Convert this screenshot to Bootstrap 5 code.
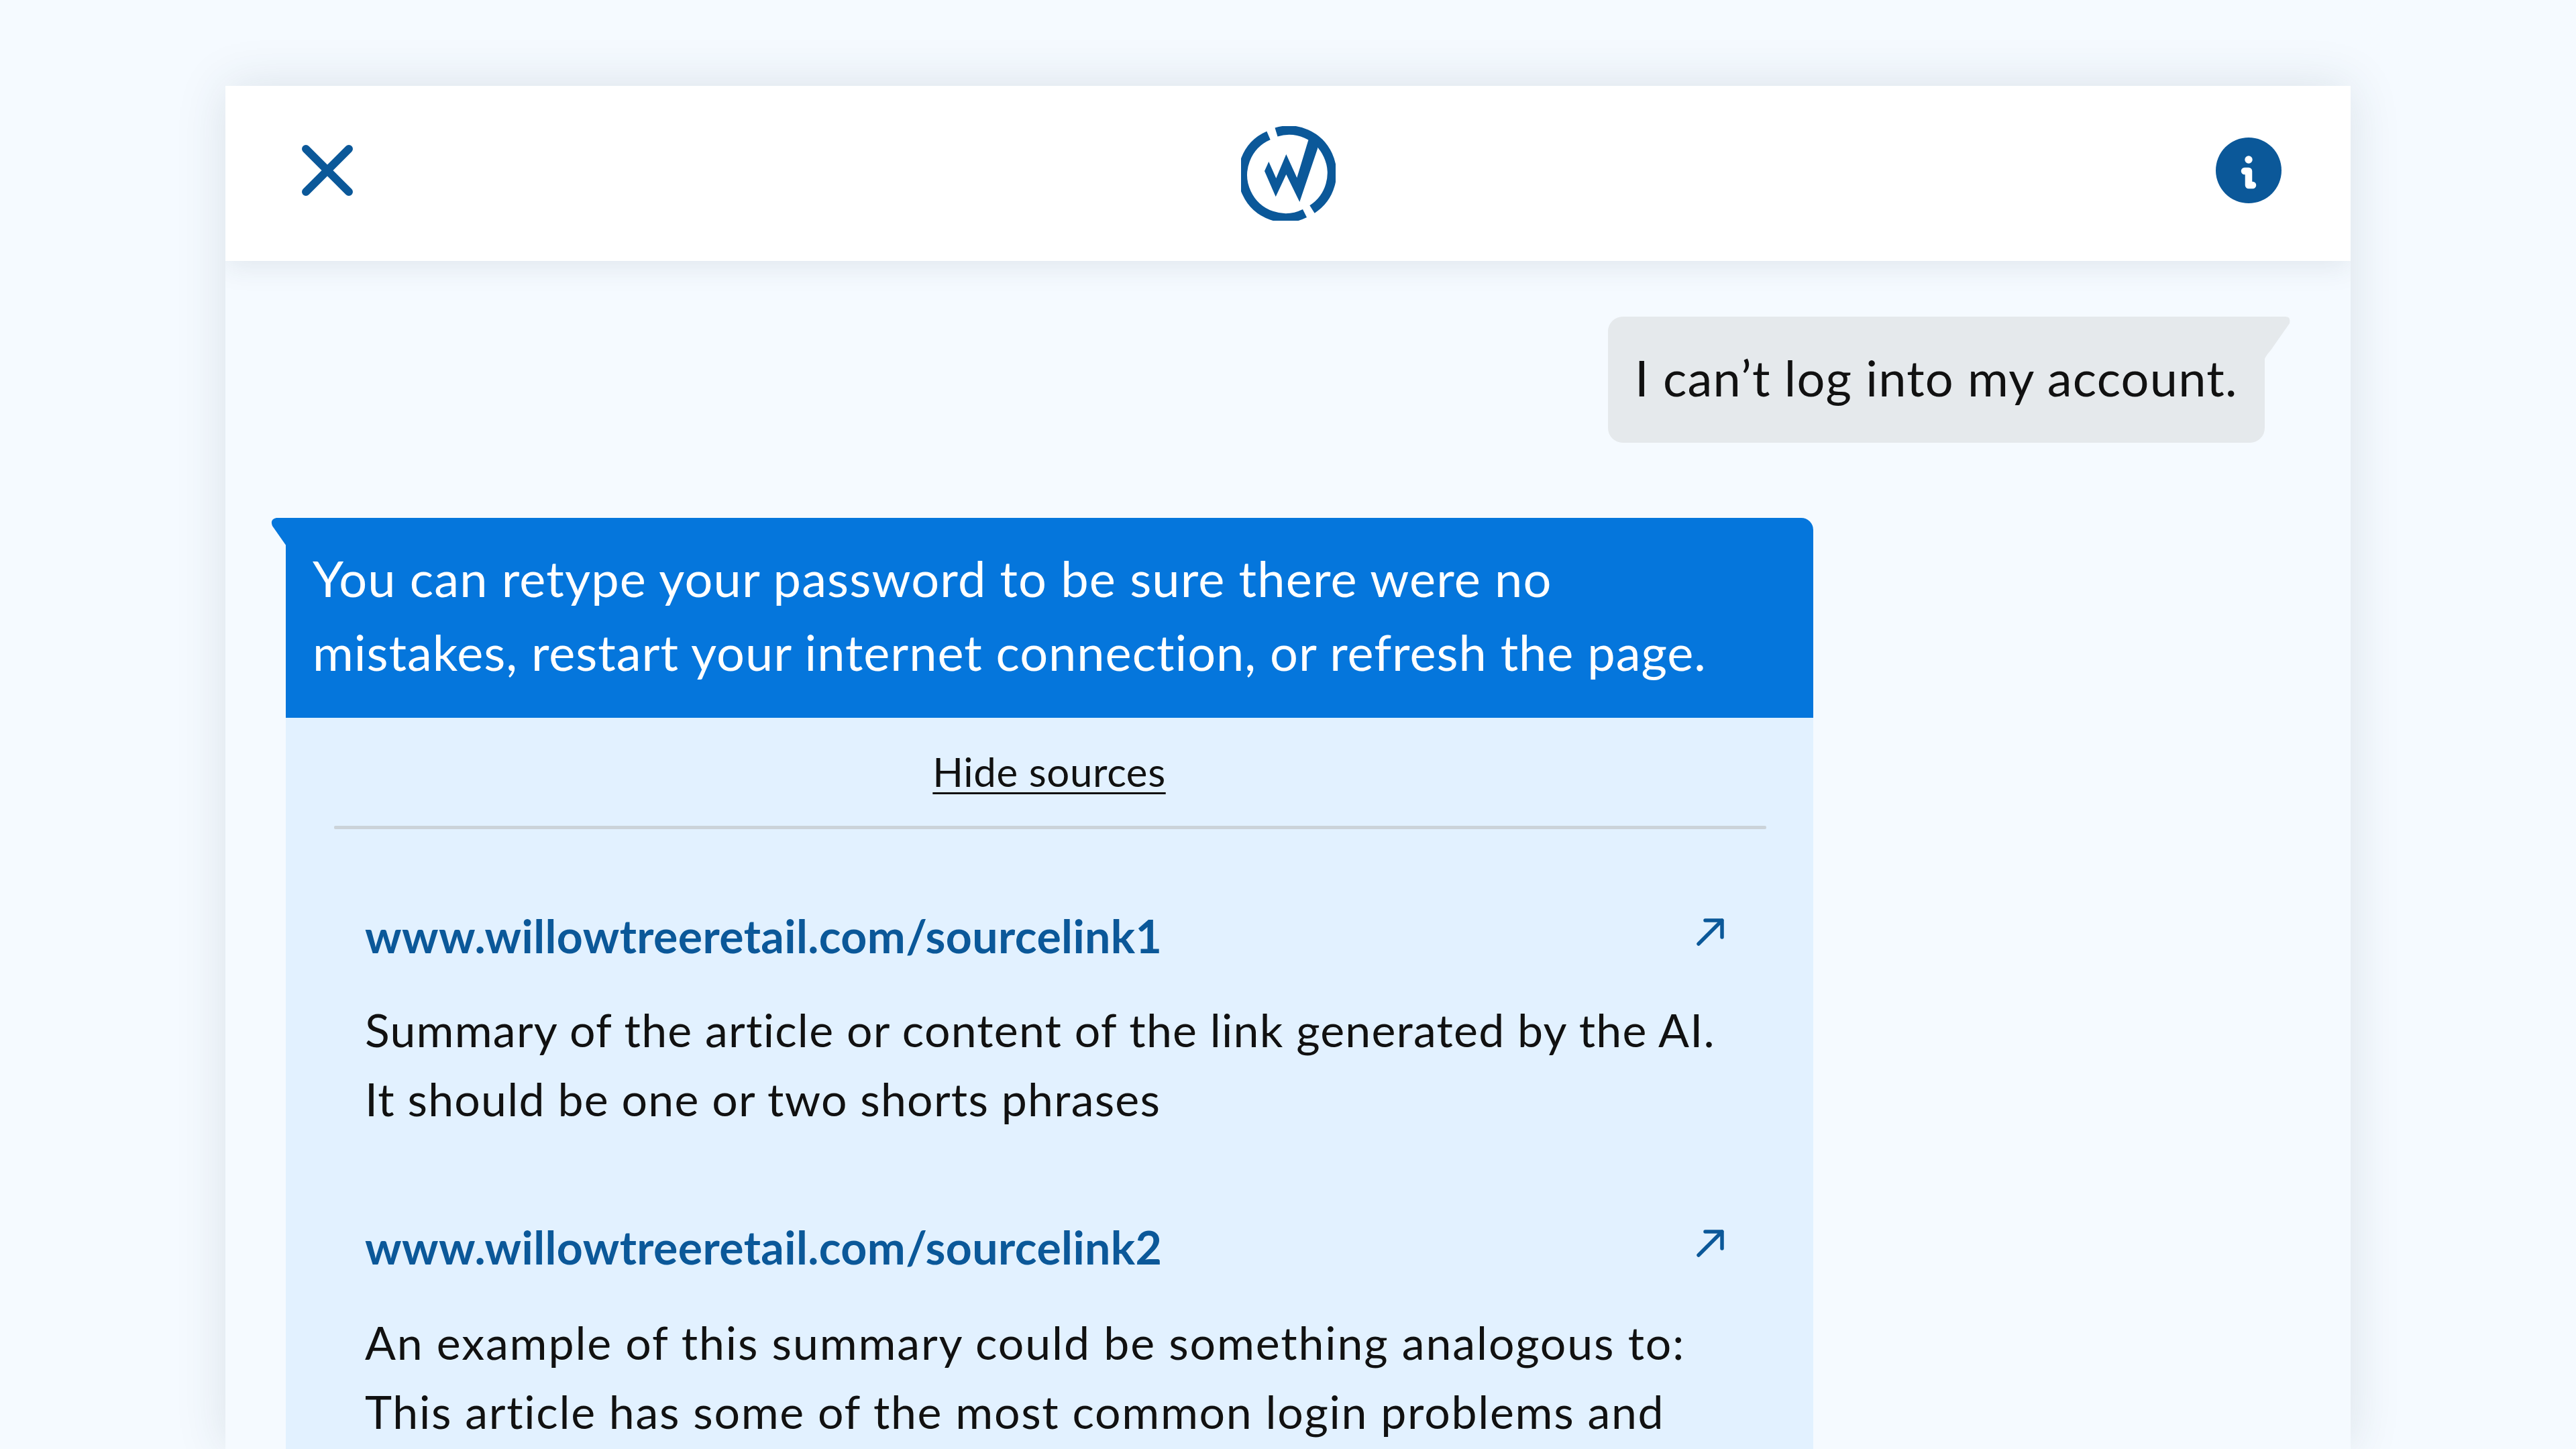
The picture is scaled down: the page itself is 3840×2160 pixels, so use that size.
<!DOCTYPE html>
<html lang="en">
<head>
<meta charset="utf-8">
<title>Chat</title>
<link rel="stylesheet" href="https://cdn.jsdelivr.net/npm/bootstrap@5.3.0/dist/css/bootstrap.min.css">
<style>
html,body{height:2160px;overflow:hidden}
body{background:#f5faff;font-family:"Lato","Liberation Sans",sans-serif;color:#111;padding:128px 336px 0}
.chat-window{height:2032px;background:#f5faff;box-shadow:0 0 70px rgba(40,60,80,.13);overflow:hidden}
.chat-head{height:261px;background:#fff;padding:0 103px 0 114px;box-shadow:0 8px 40px rgba(40,60,80,.1);position:relative}
.head-side{flex:1 1 0;line-height:0;margin-bottom:10px}
.logo-mark{margin-right:11px}
.chat-body{padding:83px 128px 0 68px}
.user-msg{width:979px;height:188px;background:#e5e9ec;border-radius:0 0 22px 22px;border-top-left-radius:22px;font-size:74px;line-height:182px;padding-left:40px;position:relative;letter-spacing:1.2px;white-space:nowrap}
.user-msg svg{position:absolute;left:100%;top:0;margin-left:-1px}
.bot-wrap{width:2277px;margin-top:112px;margin-left:22px}
.bot-msg{background:#0576dc;color:#fff;height:298px;padding:35px 0 0 40px;font-size:74px;line-height:110px;border-top-right-radius:18px;position:relative;letter-spacing:.96px;white-space:nowrap}
.bot-first{letter-spacing:1.14px}
.bot-msg svg{position:absolute;right:100%;top:0;margin-right:-1px}
.src-panel{background:#e2f1ff;padding:42px 70px 0 72px;min-height:1200px}
.hide-link{color:#111;font-size:60px;line-height:76px;letter-spacing:.6px;text-decoration:underline;text-underline-offset:8px;text-decoration-thickness:3px;display:block;text-align:center;margin-left:-3px}
.src-rule{height:5px;background:#cbd3d9;border-radius:2px;margin:43px 0 0}
.src-item{padding:0 0 0 46px}
.src-first{margin-top:111px}
.src-title{height:96px;margin-right:63px}
.src-url{color:#0b5899;font-weight:700;font-size:68px;line-height:96px;letter-spacing:.4px;text-decoration:none;white-space:nowrap}
.arrow-ic{margin-top:22px}
.src-text{font-size:68px;line-height:103px;margin:40px 0 0;letter-spacing:1.22px;white-space:nowrap;color:#111}
.src-wide{letter-spacing:1.7px;margin-top:42px}
.src-wider{letter-spacing:1.87px}
.src-next{margin-top:122px}
</style>
</head>
<body>
<div class="chat-window">
  <header class="chat-head d-flex align-items-center">
    <div class="head-side">
      <a href="#" aria-label="Close" class="d-inline-block">
        <svg width="76" height="76" viewBox="0 0 76 76"><path d="M6 6 70 70M70 6 6 70" stroke="#0b5899" stroke-width="12" stroke-linecap="round" fill="none"/></svg>
      </a>
    </div>
    <svg class="logo-mark" width="141" height="141" viewBox="0 0 141 141" aria-label="WillowTree">
      <path d="M41 14A64 64 0 1 0 95 130" fill="none" stroke="#0b5899" stroke-width="13.5"/>
      <path d="M52.5 9A64 64 0 0 1 106 124" fill="none" stroke="#0b5899" stroke-width="13.5"/>
      <path d="M41.3 53 52.3 77.7 67.3 42 83.3 77 100 22 104 12 115.7 15.3 114 33.7 87.3 113 67.3 72 51.7 105.3 35 67Z" fill="#0b5899"/>
    </svg>
    <div class="head-side d-flex justify-content-end">
      <svg width="98" height="98" viewBox="0 0 98 98" aria-label="Info">
        <circle cx="49" cy="49" r="49" fill="#0b5899"/>
        <circle cx="49" cy="33" r="5.7" fill="#fff"/>
        <path d="M43 50H49V71H55" fill="none" stroke="#fff" stroke-width="10.5" stroke-linecap="round" stroke-linejoin="round"/>
      </svg>
    </div>
  </header>
  <main class="chat-body">
    <div class="d-flex justify-content-end">
      <div class="user-msg">I can’t log into my account.
        <svg width="40" height="66" viewBox="0 0 40 66"><path d="M0 0H32Q40 0 38 10L10 50Q1 60 0 66Z" fill="#e5e9ec"/></svg>
      </div>
    </div>
    <div class="bot-wrap">
      <div class="bot-msg">
        <svg width="23" height="42" viewBox="0 0 23 42"><path d="M23 0H8Q-2 2 2 12L23 42Z" fill="#0576dc"/></svg>
        <span class="bot-first">You can retype your password to be sure there were no</span><br>mistakes, restart your internet connection, or refresh the page.
      </div>
      <section class="src-panel">
        <a href="#" class="hide-link">Hide sources</a>
        <div class="src-rule"></div>
        <article class="src-item src-first">
          <div class="src-title d-flex justify-content-between align-items-start">
            <a href="#" class="src-url">www.willowtreeretail.com/sourcelink1</a>
            <svg class="arrow-ic" width="42" height="42" viewBox="0 0 42 42"><path d="M14 3H39V28M39 3 4 38" fill="none" stroke="#0b5899" stroke-width="5.5" stroke-linecap="round" stroke-linejoin="round"/></svg>
          </div>
          <p class="src-text">Summary of the article or content of the link generated by the AI.<br>It should be one or two shorts phrases</p>
        </article>
        <article class="src-item src-next">
          <div class="src-title d-flex justify-content-between align-items-start">
            <a href="#" class="src-url">www.willowtreeretail.com/sourcelink2</a>
            <svg class="arrow-ic" width="42" height="42" viewBox="0 0 42 42"><path d="M14 3H39V28M39 3 4 38" fill="none" stroke="#0b5899" stroke-width="5.5" stroke-linecap="round" stroke-linejoin="round"/></svg>
          </div>
          <p class="src-text src-wide"><span class="src-wider">An example of this summary could be something analogous to:</span><br>This article has some of the most common login problems and</p>
        </article>
      </section>
    </div>
  </main>
</div>
<script src="https://cdn.jsdelivr.net/npm/bootstrap@5.3.0/dist/js/bootstrap.bundle.min.js"></script>
</body>
</html>
